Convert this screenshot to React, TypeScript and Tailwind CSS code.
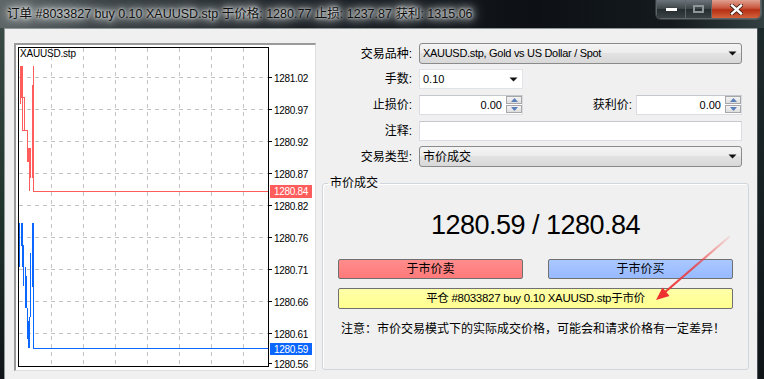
import React from "react";

const F = "font-['Liberation_Sans','Noto_Sans_CJK_SC',sans-serif]";

function DownTri() {
  return (
    <svg width="9" height="5" viewBox="0 0 9 5" className="shrink-0">
      <path d="M0.5 0.5 H8.5 L4.5 4.5 Z" fill="#111" />
    </svg>
  );
}

function Spinner() {
  return (
    <div className="w-[16px] h-[18px] flex flex-col gap-[1px] my-[1px] mr-[0px] shrink-0">
      <div className="h-[8px] border border-[#a7a7a7] bg-[linear-gradient(#f4f4f4,#dedede)] flex items-center justify-center">
        <svg width="7" height="4" viewBox="0 0 7 4">
          <path d="M0 4 L3.5 0 L7 4 Z" fill="#5b7fb8" />
        </svg>
      </div>
      <div className="h-[8px] border border-[#a7a7a7] bg-[linear-gradient(#f4f4f4,#dedede)] flex items-center justify-center">
        <svg width="7" height="4" viewBox="0 0 7 4">
          <path d="M0 0 L3.5 4 L7 0 Z" fill="#5b7fb8" />
        </svg>
      </div>
    </div>
  );
}

function Chart() {
  const hy = [77, 109, 141, 173, 205, 237, 269, 301, 333];
  const vx = [51, 83, 115, 147, 179, 211, 243];
  const labels: [string, number][] = [
    ["1281.02", 78],
    ["1280.97", 110],
    ["1280.92", 142],
    ["1280.87", 174],
    ["1280.82", 206],
    ["1280.76", 238],
    ["1280.71", 270],
    ["1280.66", 302],
    ["1280.61", 334],
    ["1280.56", 364],
  ];
  const red = "#ff5c5c";
  const blue = "#0a66ff";
  return (
    <svg width="299" height="325" viewBox="16 45 299 325" className="block">
      <rect x="16" y="45" width="299" height="325" fill="#fff" />
      {hy.map((y) => (
        <line key={"h" + y} x1="19" x2="268" y1={y + 0.5} y2={y + 0.5} stroke="#c4c4c4" strokeDasharray="4 4" shapeRendering="crispEdges" />
      ))}
      {vx.map((x) => (
        <line key={"v" + x} x1={x + 0.5} x2={x + 0.5} y1="48" y2="366" stroke="#c4c4c4" strokeDasharray="4 4" shapeRendering="crispEdges" />
      ))}
      <rect x="18.5" y="47.5" width="250" height="319" fill="none" stroke="#000" shapeRendering="crispEdges" />
      {hy.map((y) => (
        <line key={"t" + y} x1="268" x2="272" y1={y + 0.5} y2={y + 0.5} stroke="#000" shapeRendering="crispEdges" />
      ))}
      <line x1="268" x2="272" y1="363.5" y2="363.5" stroke="#000" shapeRendering="crispEdges" />
      <path
        d="M20.5 66 V104 M21.5 66 V97 H24.5 V130 M22.5 66 V130 H27.5 V162 M28.5 148 V162 M29.5 148 V191 M30.5 148 V178 M32.5 85 V178 M33.5 66 V191 H268"
        fill="none"
        stroke={red}
        shapeRendering="crispEdges"
      />
      <path
        d="M19.5 223 V267 M21.5 223 V245 H23.5 V286 M22.5 223 V267 M25.5 267 V308 M26.5 276 V308 M27.5 308 V339 M28.5 321 V348 M29.5 317 V348 M30.5 253 V317 M32.5 223 V287 M33.5 223 V348 H268"
        fill="none"
        stroke={blue}
        strokeWidth="1"
        shapeRendering="crispEdges"
      />
      <text x="20" y="53" dominantBaseline="central" fontSize="10" letterSpacing="-0.2" fill="#000" fontFamily="Liberation Sans, sans-serif">
        XAUUSD.stp
      </text>
      {labels.map(([t, y]) => (
        <text key={t} x="274" y={y} dominantBaseline="central" fontSize="10" letterSpacing="-0.3" fill="#000" fontFamily="Liberation Sans, sans-serif">
          {t}
        </text>
      ))}
      <rect x="270" y="185" width="42" height="13" fill={red} />
      <text x="274" y="191.5" dominantBaseline="central" fontSize="10" letterSpacing="-0.3" fill="#fff" fontFamily="Liberation Sans, sans-serif">
        1280.84
      </text>
      <rect x="270" y="343" width="42" height="12" fill={blue} />
      <text x="274" y="349" dominantBaseline="central" fontSize="10" letterSpacing="-0.3" fill="#fff" fontFamily="Liberation Sans, sans-serif">
        1280.59
      </text>
    </svg>
  );
}

export default function App() {
  return (
    <div className={`relative w-[764px] h-[379px] overflow-hidden flex flex-col bg-[#12171b] ${F}`}>
      {/* Title bar */}
      <div className="h-[28px] flex items-start shrink-0 bg-[linear-gradient(90deg,#5d6466_0%,#3a4043_12%,#1a1f24_40%,#0d1116_70%,#141a1e_88%,#334041_100%)]">
        <div className="flex-1 h-[28px] pl-[7px] leading-[28px] text-[12.5px] text-[#111] whitespace-nowrap [text-shadow:0_0_3px_#f2f4f4,0_0_6px_#e4e8e8,0_0_10px_#d6dada,0_0_14px_#c9cece,0_0_18px_#bfc4c4]">
          订单 #8033827 buy 0.10 XAUUSD.stp 于价格: 1280.77 止损: 1237.87 获利: 1315.06
        </div>
        <div className="mr-[3px] flex h-[19px] rounded-b-[5px] border border-t-0 border-[#5e6468] overflow-hidden shadow-[0_0_0_1px_rgba(255,255,255,0.15)]">
          <div className="w-[29px] h-full flex items-center justify-center bg-[linear-gradient(#6b7479,#3d4448_50%,#262c30_50%,#3a4246)] border-r border-[#5e6468]">
            <div className="w-[11px] h-[3px] bg-white shadow-[0_0_1px_#000]" />
          </div>
          <div className="w-[26px] h-full flex items-center justify-center bg-[linear-gradient(#6b7479,#3d4448_50%,#262c30_50%,#3a4246)] border-r border-[#5e6468]">
            <div className="w-[11px] h-[8px] border-2 border-[#8e969a]" />
          </div>
          <div className="w-[48px] h-full flex items-center justify-center bg-[linear-gradient(#e0a090,#c8553c_45%,#b52f14_55%,#d2623c)]">
            <svg width="13" height="11" viewBox="0 0 13 11">
              <path d="M2 1.5 L11 9.5 M11 1.5 L2 9.5" stroke="#3a1a10" strokeWidth="4" strokeLinecap="square" />
              <path d="M2 1.5 L11 9.5 M11 1.5 L2 9.5" stroke="#fff" strokeWidth="2.4" strokeLinecap="square" />
            </svg>
          </div>
        </div>
      </div>

      {/* Body */}
      <div className="flex flex-1 min-h-0">
        <div className="w-[4px] bg-[linear-gradient(#3a4a44,#20352c_50%,#101418)]" />
        <div className="w-[753px] bg-[#f0f0f0] border-l border-t border-[#8f9698] flex items-start">
          {/* Chart panel */}
          <div className="ml-[9px] mt-[14px] w-[302px] h-[328px] border-l-2 border-t-2 border-r border-b border-l-[#9a9a9a] border-t-[#9a9a9a] border-r-[#dedede] border-b-[#dedede] bg-white">
            <Chart />
          </div>

          {/* Right form */}
          <div className="mt-[14px] flex flex-col text-[12px] text-black">
            <div className="flex items-center h-[21px]">
              <div className="w-[96px] text-right">交易品种:</div>
              <div className="ml-[7px] w-[323px] h-[21px] rounded-[3px] border border-[#8a8a8a] bg-[linear-gradient(#f4f4f4,#ececec_50%,#e2e2e2_50%,#d8d8d8)] flex items-center pl-[3px] pr-[4px]">
                <span className="flex-1 text-[11px] tracking-[-0.3px]">XAUUSD.stp, Gold vs US Dollar / Spot</span>
                <DownTri />
              </div>
            </div>

            <div className="flex items-center h-[20px] mt-[5px]">
              <div className="w-[96px] text-right">手数:</div>
              <div className="ml-[7px] w-[104px] h-[20px] border border-[#e2e3e8] bg-white flex items-center pl-[3px] pr-[4px]">
                <span className="flex-1 text-[11px]">0.10</span>
                <DownTri />
              </div>
            </div>

            <div className="flex items-center h-[20px] mt-[6px]">
              <div className="w-[96px] text-right">止损价:</div>
              <div className="ml-[7px] w-[104px] h-[20px] border border-[#dcdde2] border-t-[#c4c7cc] bg-white flex items-center">
                <span className="flex-1 text-right pr-[4px] text-[11px]">0.00</span>
                <Spinner />
              </div>
              <div className="w-[109px] text-right">获利价:</div>
              <div className="ml-[4px] w-[106px] h-[20px] border border-[#dcdde2] border-t-[#c4c7cc] bg-white flex items-center">
                <span className="flex-1 text-right pr-[4px] text-[11px]">0.00</span>
                <Spinner />
              </div>
            </div>

            <div className="flex items-center h-[20px] mt-[6px]">
              <div className="w-[96px] text-right">注释:</div>
              <div className="ml-[7px] w-[323px] h-[20px] border border-[#dcdde2] border-t-[#c4c7cc] bg-white" />
            </div>

            <div className="flex items-center h-[21px] mt-[5px]">
              <div className="w-[96px] text-right">交易类型:</div>
              <div className="ml-[7px] w-[323px] h-[21px] rounded-[3px] border border-[#8a8a8a] bg-[linear-gradient(#f4f4f4,#ececec_50%,#e2e2e2_50%,#d8d8d8)] flex items-center pl-[3px] pr-[4px]">
                <span className="flex-1">市价成交</span>
                <DownTri />
              </div>
            </div>

            <fieldset className="ml-[6px] mt-[9px] w-[426px] h-[194px] border border-[#cfd7dc] rounded-[3px] shadow-[inset_1px_1px_0_#fff]">
              <legend className="ml-[5px] px-[2px] text-[12px] leading-[14px]">市价成交</legend>
              <div className="px-[15px] flex flex-col">
                <div className="mt-[19px] h-[32px] leading-[32px] text-center text-[27px] tracking-[-0.5px]">
                  1280.59 / 1280.84
                </div>
                <div className="mt-[18px] flex justify-between">
                  <div className="w-[185px] h-[20px] rounded-[2px] border border-[#707070] bg-[linear-gradient(#ff8c8c,#ff7a7a)] flex items-center justify-center">
                    于市价卖
                  </div>
                  <div className="w-[185px] h-[20px] rounded-[2px] border border-[#707070] bg-[linear-gradient(#aac8ff,#97b9ff)] flex items-center justify-center">
                    于市价买
                  </div>
                </div>
                <div className="mt-[9px] w-[395px] h-[21px] rounded-[2px] border border-[#707070] bg-[linear-gradient(#ffffa8,#ffff90)] flex items-center justify-center text-[11.5px] tracking-[-0.3px]">
                  平仓 #8033827 buy 0.10 XAUUSD.stp于市价
                </div>
                <div className="mt-[12px] ml-[3px] h-[16px] leading-[16px] text-[12px] whitespace-nowrap">
                  注意：市价交易模式下的实际成交价格，可能会和请求价格有一定差异！
                </div>
              </div>
            </fieldset>
          </div>
        </div>
        <div className="w-[7px] bg-[linear-gradient(#1d2a2c,#0f1417)] border-l border-[#4b5356]" />
      </div>

      {/* Annotation arrow */}
      <svg className="absolute left-0 top-0 pointer-events-none" width="764" height="379" viewBox="0 0 764 379">
        <defs>
          <linearGradient id="arrowGrad" x1="729" y1="237" x2="660" y2="296" gradientUnits="userSpaceOnUse">
            <stop offset="0" stopColor="#ee3b3b" stopOpacity="0.1" />
            <stop offset="0.5" stopColor="#ee3b3b" stopOpacity="0.8" />
            <stop offset="1" stopColor="#ee3030" stopOpacity="1" />
          </linearGradient>
        </defs>
        <path d="M729 237 L664 293" stroke="url(#arrowGrad)" strokeWidth="2.2" strokeLinecap="round" />
        <path d="M656 300 L669.5 296 L662.5 287.5 Z" fill="#ee3030" />
      </svg>
    </div>
  );
}
